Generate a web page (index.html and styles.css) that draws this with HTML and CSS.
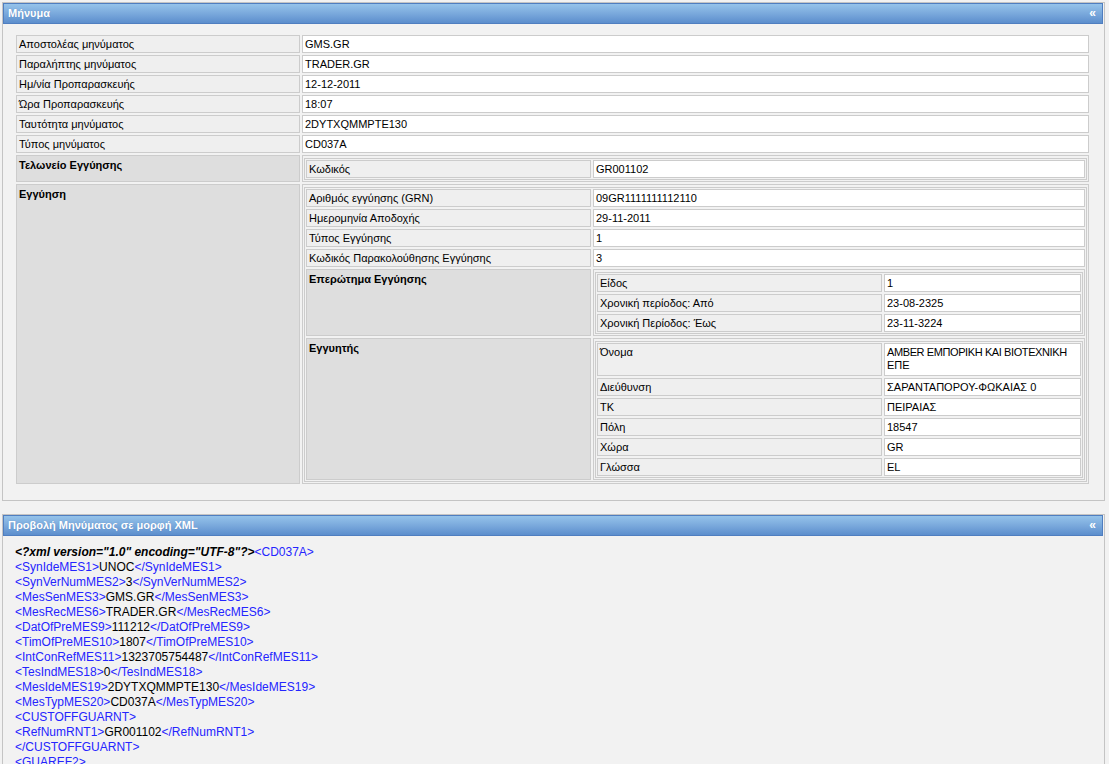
FILE: index.html
```html
<!DOCTYPE html>
<html lang="el">
<head>
<meta charset="utf-8">
<title>Μήνυμα</title>
<link rel="stylesheet" href="styles.css">
</head>
<body>
<div class="panel">
  <div class="panel-head"><span class="title">Μήνυμα</span><span class="collapse">«</span></div>
  <div class="panel-body">
    <div class="kv">
      <div class="k">Αποστολέας μηνύματος</div><div class="v">GMS.GR</div>
      <div class="k">Παραλήπτης μηνύματος</div><div class="v">TRADER.GR</div>
      <div class="k">Ημ/νία Προπαρασκευής</div><div class="v">12-12-2011</div>
      <div class="k">Ώρα Προπαρασκευής</div><div class="v">18:07</div>
      <div class="k">Ταυτότητα μηνύματος</div><div class="v">2DYTXQMMPTE130</div>
      <div class="k">Τύπος μηνύματος</div><div class="v">CD037A</div>
      <div class="k group">Τελωνείο Εγγύησης</div>
      <div class="v nest">
        <div class="kv inner">
          <div class="k">Κωδικός</div><div class="v">GR001102</div>
        </div>
      </div>
      <div class="k group">Εγγύηση</div>
      <div class="v nest">
        <div class="kv inner">
          <div class="k">Αριθμός εγγύησης (GRN)</div><div class="v">09GR1111111112110</div>
          <div class="k">Ημερομηνία Αποδοχής</div><div class="v">29-11-2011</div>
          <div class="k">Τύπος Εγγύησης</div><div class="v">1</div>
          <div class="k">Κωδικός Παρακολούθησης Εγγύησης</div><div class="v">3</div>
          <div class="k group">Επερώτημα Εγγύησης</div>
          <div class="v nest">
            <div class="kv inner">
              <div class="k">Είδος</div><div class="v">1</div>
              <div class="k">Χρονική περίοδος: Από</div><div class="v">23-08-2325</div>
              <div class="k">Χρονική Περίοδος: Έως</div><div class="v">23-11-3224</div>
            </div>
          </div>
          <div class="k group">Εγγυητής</div>
          <div class="v nest">
            <div class="kv inner">
              <div class="k">Όνομα</div><div class="v tall"><span class="nowrap">AMBER ΕΜΠΟΡΙΚΗ ΚΑΙ ΒΙΟΤΕΧΝΙΚΗ</span> ΕΠΕ</div>
              <div class="k">Διεύθυνση</div><div class="v">ΣΑΡΑΝΤΑΠΟΡΟΥ-ΦΩΚΑΙΑΣ 0</div>
              <div class="k">ΤΚ</div><div class="v">ΠΕΙΡΑΙΑΣ</div>
              <div class="k">Πόλη</div><div class="v">18547</div>
              <div class="k">Χώρα</div><div class="v">GR</div>
              <div class="k">Γλώσσα</div><div class="v">EL</div>
            </div>
          </div>
        </div>
      </div>
    </div>
  </div>
</div>

<div class="panel second">
  <div class="panel-head"><span class="title">Προβολή Μηνύματος σε μορφή XML</span><span class="collapse">«</span></div>
  <div class="panel-body xml">
    <div class="line"><span class="decl">&lt;?xml version="1.0" encoding="UTF-8"?&gt;</span><span class="tag">&lt;CD037A&gt;</span></div>
    <div class="line"><span class="tag">&lt;SynIdeMES1&gt;</span>UNOC<span class="tag">&lt;/SynIdeMES1&gt;</span></div>
    <div class="line"><span class="tag">&lt;SynVerNumMES2&gt;</span>3<span class="tag">&lt;/SynVerNumMES2&gt;</span></div>
    <div class="line"><span class="tag">&lt;MesSenMES3&gt;</span>GMS.GR<span class="tag">&lt;/MesSenMES3&gt;</span></div>
    <div class="line"><span class="tag">&lt;MesRecMES6&gt;</span>TRADER.GR<span class="tag">&lt;/MesRecMES6&gt;</span></div>
    <div class="line"><span class="tag">&lt;DatOfPreMES9&gt;</span>111212<span class="tag">&lt;/DatOfPreMES9&gt;</span></div>
    <div class="line"><span class="tag">&lt;TimOfPreMES10&gt;</span>1807<span class="tag">&lt;/TimOfPreMES10&gt;</span></div>
    <div class="line"><span class="tag">&lt;IntConRefMES11&gt;</span>1323705754487<span class="tag">&lt;/IntConRefMES11&gt;</span></div>
    <div class="line"><span class="tag">&lt;TesIndMES18&gt;</span>0<span class="tag">&lt;/TesIndMES18&gt;</span></div>
    <div class="line"><span class="tag">&lt;MesIdeMES19&gt;</span>2DYTXQMMPTE130<span class="tag">&lt;/MesIdeMES19&gt;</span></div>
    <div class="line"><span class="tag">&lt;MesTypMES20&gt;</span>CD037A<span class="tag">&lt;/MesTypMES20&gt;</span></div>
    <div class="line"><span class="tag">&lt;CUSTOFFGUARNT&gt;</span></div>
    <div class="line"><span class="tag">&lt;RefNumRNT1&gt;</span>GR001102<span class="tag">&lt;/RefNumRNT1&gt;</span></div>
    <div class="line"><span class="tag">&lt;/CUSTOFFGUARNT&gt;</span></div>
    <div class="line"><span class="tag">&lt;GUAREF2&gt;</span></div>
  </div>
</div>
</body>
</html>
```
FILE: styles.css
```css
html, body {
  background: #f2f2f2;
}
body {
  margin: 2px 4px 0 2px;
  font-family: "Liberation Sans", Arial, sans-serif;
  font-size: 11px;
  color: #000;
}
.panel {
  border: 1px solid #c4c4c4;
  background: #f2f2f2;
  padding: 0 1px 0 0;
}
.panel.second {
  margin-top: 13px;
}
.panel-head {
  border: 1px solid #4f7ec0;
  background: linear-gradient(to bottom, #95c3ea 0%, #7aa9dc 50%, #5c8ecd 100%);
  display: flex;
  align-items: center;
  justify-content: space-between;
  padding: 0 6px 1px 4px;
  box-sizing: border-box;
  height: 21px;
  color: #fff;
  font-weight: bold;
  font-size: 11px;
}
.panel-head .title {
  text-shadow: 0 0 1px rgba(40, 80, 140, 0.35);
}
.panel-head .collapse {
  font-size: 12px;
  line-height: 1;
}
.panel-body {
  padding: 9px 12px 14px 11px;
}
.kv {
  display: grid;
  grid-template-columns: 284px 1fr;
  gap: 2px;
  padding: 2px;
}
.kv.inner {
  grid-template-columns: 285px 1fr;
  border: 1px solid #cccccc;
  padding: 1px;
}
.k, .v {
  border: 1px solid #cccccc;
  padding: 2px 2px 1px 2px;
  line-height: 13px;
  min-height: 13px;
}
.k {
  background: #efefef;
}
.v {
  background: #fff;
}
.v.tall {
  padding-bottom: 3px;
}
.nowrap {
  white-space: nowrap;
  letter-spacing: -0.4px;
}
.k.group {
  background: #dedede;
  font-weight: bold;
  padding-top: 3px;
}
.v.nest {
  background: transparent;
  padding: 2px 1px 1px 1px;
}
.panel-body.xml {
  padding: 9px 12px 20px 12px;
  font-size: 12px;
  line-height: 15px;
}
.xml .tag {
  color: #2424ff;
}
.xml .decl {
  font-weight: bold;
  font-style: italic;
}
```
